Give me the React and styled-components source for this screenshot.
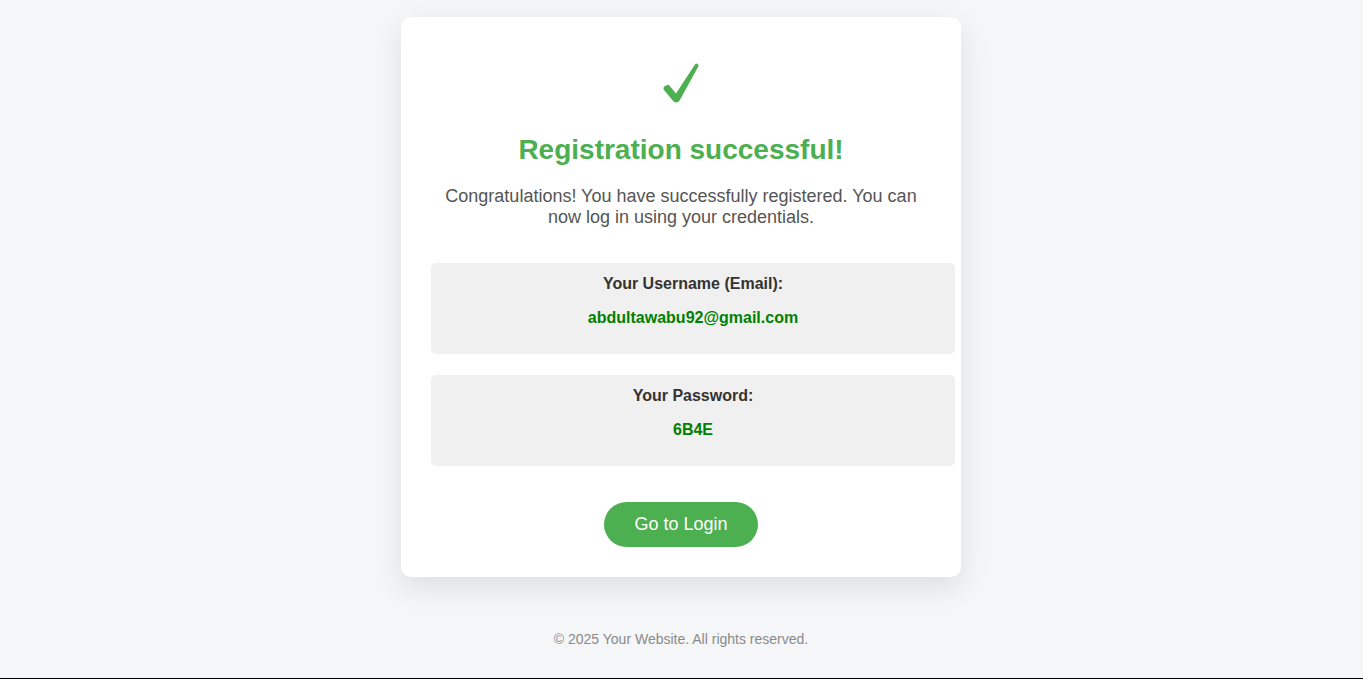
import React from "react";
import styled, { createGlobalStyle } from "styled-components";

const Global = createGlobalStyle`
  html, body { margin: 0; padding: 0; }
  body {
    background: #f5f6f8;
    font-family: "Liberation Sans", Arial, sans-serif;
  }
`;

const Page = styled.div`
  min-height: 100vh;
  box-sizing: border-box;
  border-bottom: 1px solid #000;
  display: flex;
  flex-direction: column;
  align-items: center;
  padding-top: 17px;
  padding-right: 1px;
`;

const Card = styled.div`
  width: 500px;
  padding: 30px;
  background: #ffffff;
  border-radius: 10px;
  box-shadow: 0 10px 30px rgba(0, 0, 0, 0.1);
  display: flex;
  flex-direction: column;
  align-items: flex-start;
  text-align: center;
`;

const IconWrap = styled.div`
  align-self: stretch;
  display: flex;
  justify-content: center;
  padding-top: 16px;
  padding-left: 1px;
  height: 40px;

  svg {
    overflow: visible;
  }
`;

const Title = styled.h1`
  align-self: stretch;
  margin: 31px 0 0;
  font-size: 28px;
  line-height: 32px;
  font-weight: 700;
  color: #4caf50;
`;

const Message = styled.p`
  align-self: stretch;
  margin: 20px 0 0;
  font-size: 18px;
  line-height: 21px;
  color: #555555;
`;

const InfoBox = styled.div`
  width: 100%;
  box-sizing: content-box;
  margin-top: ${(p) => p.$gap}px;
  padding: 12px 12px 27px;
  background: #f0f0f0;
  border-radius: 5px;
  display: flex;
  flex-direction: column;
  gap: 16px;
`;

const Label = styled.div`
  font-size: 16px;
  line-height: 18px;
  font-weight: 700;
  color: #333333;
`;

const Value = styled.div`
  font-size: 16px;
  line-height: 18px;
  font-weight: 700;
  color: #008000;
`;

const Button = styled.button`
  align-self: center;
  margin-top: 36px;
  padding: 12px 30px;
  border: none;
  border-radius: 25px;
  background: #4caf50;
  color: #ffffff;
  font-family: "Liberation Sans", Arial, sans-serif;
  font-size: 18px;
  line-height: 21px;
  cursor: pointer;
`;

const Footer = styled.footer`
  margin-top: 54px;
  font-size: 14px;
  line-height: 16px;
  color: #8a8a8a;
`;

const Check = () => (
  <svg width="38" height="40" viewBox="0 0 38 40">
    <path
      d="M5.7 21.8 L13 30.6 L32.3 1 Q34 -0.6 35.7 2.8 L16.6 37.6 Q14 41 10.6 38.4 L0.6 26.4 Q-0.6 23.2 5.7 21.8 Z"
      fill="#4caf50"
    />
  </svg>
);

export default function App() {
  return (
    <>
      <Global />
      <Page>
        <Card>
          <IconWrap>
            <Check />
          </IconWrap>
          <Title>Registration successful!</Title>
          <Message>
            Congratulations! You have successfully registered. You can now log in
            using your credentials.
          </Message>
          <InfoBox $gap={35}>
            <Label>Your Username (Email):</Label>
            <Value>abdultawabu92@gmail.com</Value>
          </InfoBox>
          <InfoBox $gap={21}>
            <Label>Your Password:</Label>
            <Value>6B4E</Value>
          </InfoBox>
          <Button>Go to Login</Button>
        </Card>
        <Footer>© 2025 Your Website. All rights reserved.</Footer>
      </Page>
    </>
  );
}
